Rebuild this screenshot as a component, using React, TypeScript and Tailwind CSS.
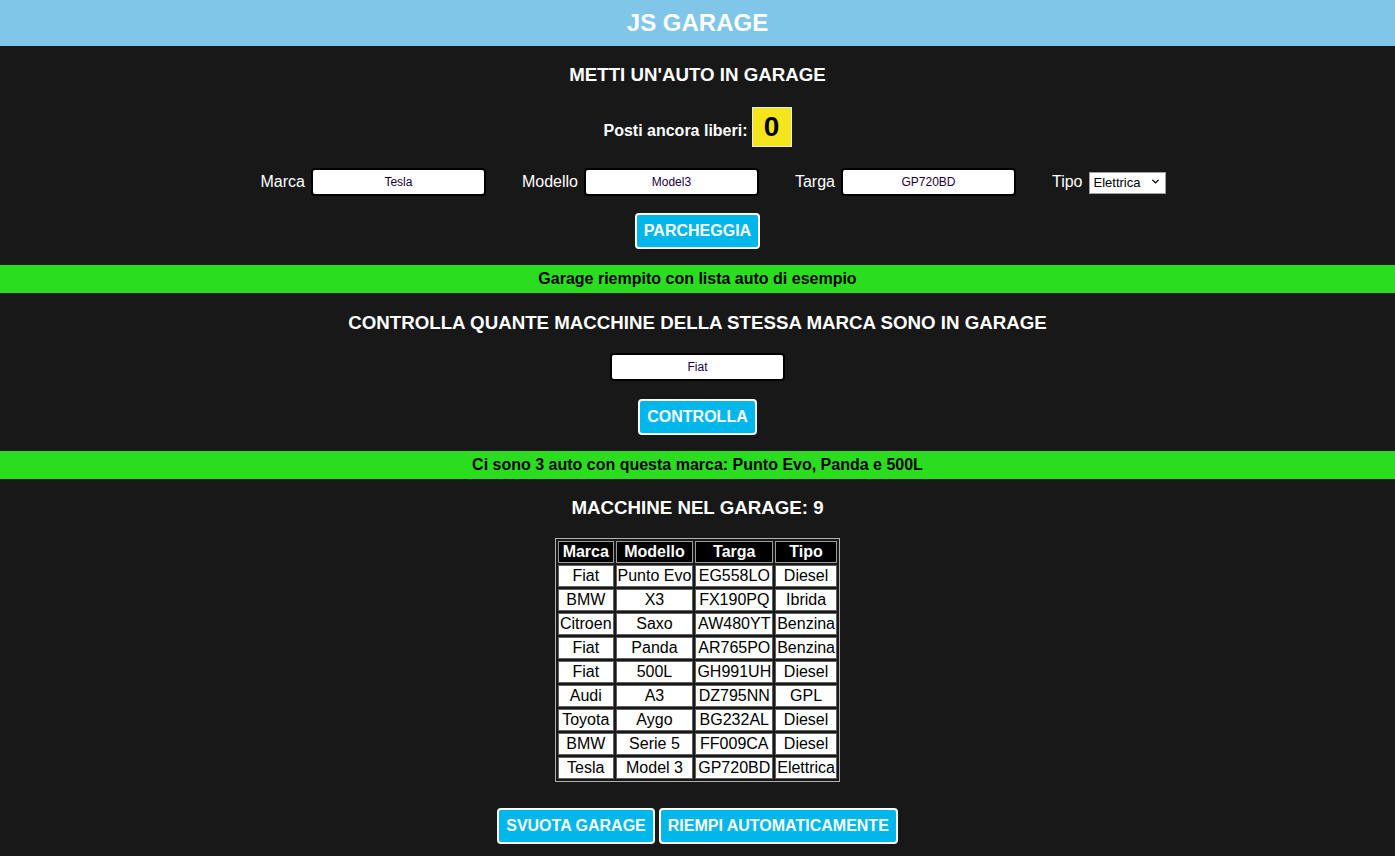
import React, { useState } from 'react';
import { ChevronDown } from 'lucide-react';

type Car = { marca: string; modello: string; targa: string; tipo: string };

const cars: Car[] = [
  { marca: 'Fiat', modello: 'Punto Evo', targa: 'EG558LO', tipo: 'Diesel' },
  { marca: 'BMW', modello: 'X3', targa: 'FX190PQ', tipo: 'Ibrida' },
  { marca: 'Citroen', modello: 'Saxo', targa: 'AW480YT', tipo: 'Benzina' },
  { marca: 'Fiat', modello: 'Panda', targa: 'AR765PO', tipo: 'Benzina' },
  { marca: 'Fiat', modello: '500L', targa: 'GH991UH', tipo: 'Diesel' },
  { marca: 'Audi', modello: 'A3', targa: 'DZ795NN', tipo: 'GPL' },
  { marca: 'Toyota', modello: 'Aygo', targa: 'BG232AL', tipo: 'Diesel' },
  { marca: 'BMW', modello: 'Serie 5', targa: 'FF009CA', tipo: 'Diesel' },
  { marca: 'Tesla', modello: 'Model 3', targa: 'GP720BD', tipo: 'Elettrica' },
];

const inputCls =
  'w-[175px] h-[28px] bg-white border-2 border-black rounded-[4px] text-center text-[12px] text-[#200040] outline-none';

const btnCls =
  'h-[36px] px-[7px] bg-[#00b7ec] border-2 border-white rounded-[4px] text-white font-bold text-[16px]';

const Field: React.FC<{ label: string; value: string }> = ({ label, value }) => (
  <div className="flex items-center gap-[6px]">
    <span className="text-white text-[16px]">{label}</span>
    <input className={inputCls} defaultValue={value} />
  </div>
);

const App: React.FC = () => {
  const [tipo, setTipo] = useState('Elettrica');

  return (
    <div className="min-h-screen bg-[#181818] font-['Liberation_Sans',Arial,sans-serif] text-white">
      {/* Header */}
      <header className="h-[46px] bg-[#80c6e9] flex items-center justify-center">
        <h1 className="text-[24px] font-bold text-white">JS GARAGE</h1>
      </header>

      {/* Parcheggia */}
      <section className="flex flex-col items-center pt-[18px]">
        <h3 className="text-[18.72px] font-bold leading-[22px]">METTI UN'AUTO IN GARAGE</h3>
        <div className="mt-[21px] flex items-baseline gap-[4px]">
          <span className="text-[16px] font-bold">Posti ancora liberi:</span>
          <span className="w-[40px] h-[40px] bg-[#f5e51b] border border-[#e8e8e8] flex items-center justify-center text-black text-[28px] font-bold">
            0
          </span>
        </div>
        <div className="mt-[21px] flex items-center gap-[36px] pl-[31px]">
          <Field label="Marca" value="Tesla" />
          <Field label="Modello" value="Model3" />
          <Field label="Targa" value="GP720BD" />
          <div className="flex items-center gap-[6px]">
            <span className="text-white text-[16px]">Tipo</span>
            <div className="relative">
              <select
                value={tipo}
                onChange={(e) => setTipo(e.target.value)}
                className="appearance-none w-[77px] h-[22px] bg-white border border-[#a0a0a0] text-black text-[13px] pl-[4px] outline-none"
              >
                <option>Benzina</option>
                <option>Diesel</option>
                <option>GPL</option>
                <option>Ibrida</option>
                <option>Elettrica</option>
              </select>
              <ChevronDown className="absolute right-[5px] top-[6px] w-[11px] h-[11px] text-black pointer-events-none" strokeWidth={3} />
            </div>
          </div>
        </div>
        <button className={`${btnCls} mt-[17px] h-[35px]`}>PARCHEGGIA</button>
      </section>

      <div className="mt-[16px] h-[28px] bg-[#2bdd1f] flex items-center justify-center text-black font-bold text-[16px]">
        Garage riempito con lista auto di esempio
      </div>

      {/* Controlla marca */}
      <section className="flex flex-col items-center pt-[19px]">
        <h3 className="text-[18.72px] font-bold leading-[22px]">
          CONTROLLA QUANTE MACCHINE DELLA STESSA MARCA SONO IN GARAGE
        </h3>
        <input className={`${inputCls} mt-[19px]`} defaultValue="Fiat" />
        <button className={`${btnCls} mt-[18px]`}>CONTROLLA</button>
      </section>

      <div className="mt-[16px] h-[28px] bg-[#2bdd1f] flex items-center justify-center text-black font-bold text-[16px]">
        Ci sono 3 auto con questa marca: Punto Evo, Panda e 500L
      </div>

      {/* Elenco auto */}
      <section className="flex flex-col items-center pt-[18px] pb-[12px]">
        <h3 className="text-[18.72px] font-bold leading-[22px]">MACCHINE NEL GARAGE: 9</h3>
        <table className="mt-[19px] border border-[#b0b0b0] border-separate border-spacing-[2px] text-[16px]">
          <thead>
            <tr>
              {['Marca', 'Modello', 'Targa', 'Tipo'].map((h) => (
                <th key={h} className="bg-black text-white font-bold border border-[#9a9a9a] px-[1px] h-[22px] leading-[18px]">
                  {h}
                </th>
              ))}
            </tr>
          </thead>
          <tbody>
            {cars.map((c) => (
              <tr key={c.targa}>
                {[c.marca, c.modello, c.targa, c.tipo].map((v, i) => (
                  <td key={i} className="bg-white text-black text-center border border-[#606060] px-[1px] h-[22px] leading-[18px]">
                    {v}
                  </td>
                ))}
              </tr>
            ))}
          </tbody>
        </table>
        <div className="mt-[26px] flex gap-[4px]">
          <button className={btnCls}>SVUOTA GARAGE</button>
          <button className={btnCls}>RIEMPI AUTOMATICAMENTE</button>
        </div>
      </section>
    </div>
  );
};

export default App;
